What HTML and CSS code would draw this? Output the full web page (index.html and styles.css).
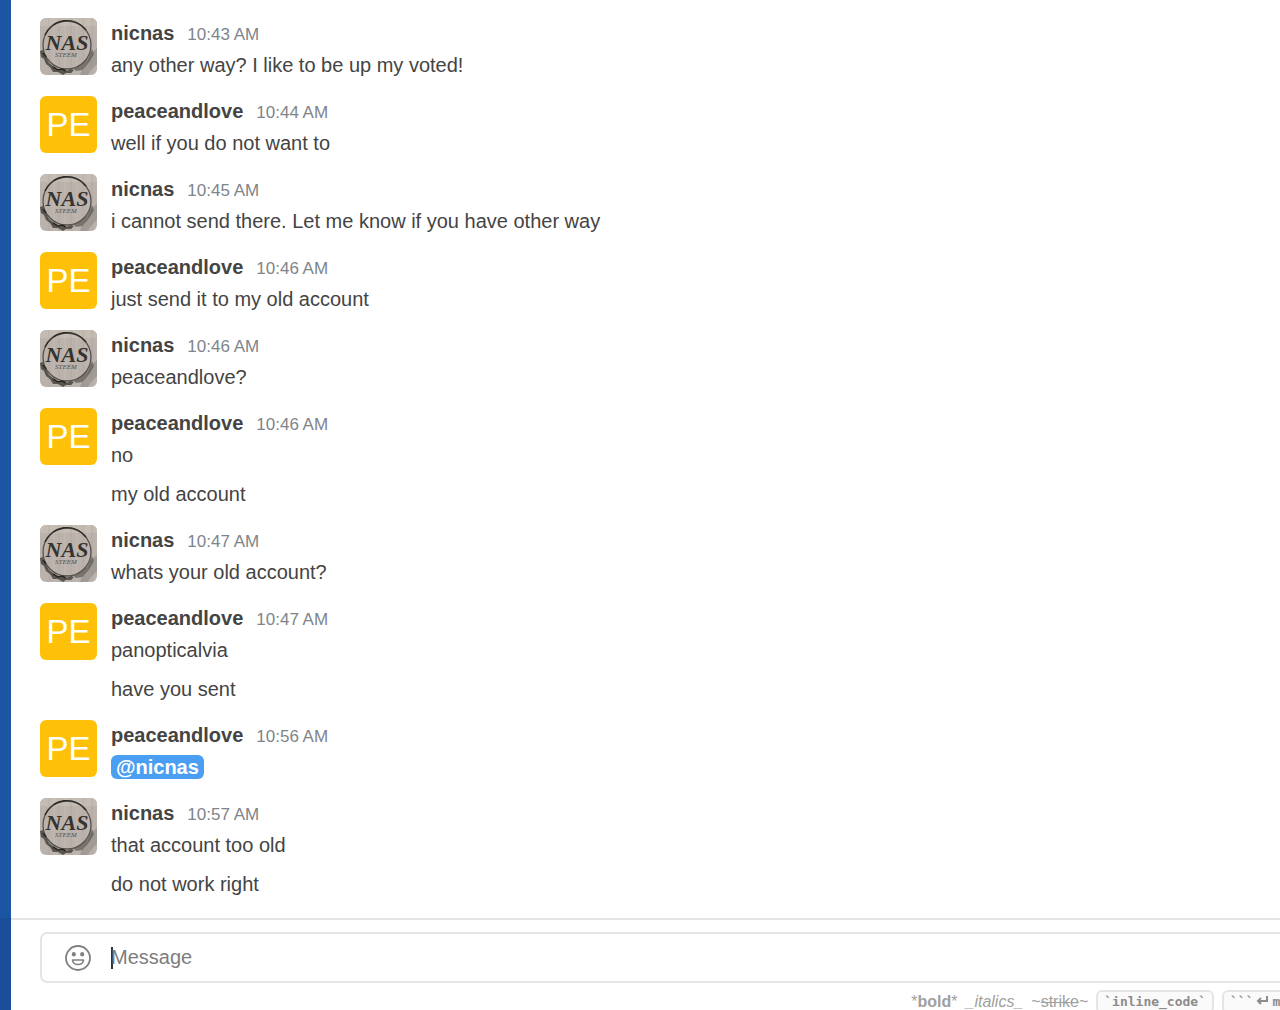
FILE: index.html
```
<!DOCTYPE html>
<html lang="en">

<head>
    <meta charset="UTF-8">
    <meta name="viewport" content="width=device-width, initial-scale=1.0">
    <title>Chat</title>
    <link rel="stylesheet" href="styles.css">
</head>

<body>

    <!-- nicnas avatar, reused by every message -->
    <svg class="sprite" aria-hidden="true">
        <symbol id="nas" viewBox="0 0 57 57">
            <rect width="57" height="57" fill="#bbb3ab"/>
            <path d="M0 0h57v8H0z" fill="#c4bcb3"/>
            <path d="M9 0v57M19 0v57M31 0v57M43 0v57M52 0v57" stroke="#aaa29a" stroke-width="1" opacity=".5"/>
            <path d="M14 0v57M25 0v57M37 0v57M48 0v57" stroke="#cdc5bc" stroke-width="1" opacity=".5"/>
            <path d="M40 57l2-6 5-6 3-9 7-6v16l-6 6-3 5z" fill="#8e8a87" opacity=".6"/>
            <circle cx="27" cy="27" r="24" fill="none" stroke="#55514d" stroke-width="1.3"/>
            <path d="M5 17A24 24 0 0 1 46 12" fill="none" stroke="#2d2b29" stroke-width="1.4"/>
            <path d="M0 33l3-1 1 5 3 4 2 4 4 3 3 3 5 1 3-1 2 2 5-2 3 1-3 3-5 0-3 2-5-3-5 0-3-5-4-3-2-5-3-2z" fill="#47433f" opacity=".85"/>
            <path d="M33 50l5-1 5-5 4-2 3-6 2-5 2 5-4 7-3 4-5 5-6 1z" fill="#5c5854" opacity=".7"/>
            <path d="M13 49l5 3 4-1 4 2M3 35l3 4" fill="none" stroke="#2a2725" stroke-width="1.6"/>
            <text x="27" y="32" text-anchor="middle" class="nas-big">NAS</text>
            <text x="26" y="39" text-anchor="middle" class="nas-small">STEEM</text>
        </symbol>
    </svg>

    <aside class="sidebar">
        <div class="sidebar-footer"></div>
    </aside>

    <main class="room">
        <div class="messages">
            <div class="message">
                <svg class="avatar"><use href="#nas"/></svg>
                <div class="content">
                    <div class="title"><strong>nicnas</strong><time>10:43 AM</time></div>
                    <p>any other way? I like to be up my voted!</p>
                </div>
            </div>
            <div class="message">
                <div class="avatar initials">PE</div>
                <div class="content">
                    <div class="title"><strong>peaceandlove</strong><time>10:44 AM</time></div>
                    <p>well if you do not want to</p>
                </div>
            </div>
            <div class="message">
                <svg class="avatar"><use href="#nas"/></svg>
                <div class="content">
                    <div class="title"><strong>nicnas</strong><time>10:45 AM</time></div>
                    <p>i cannot send there. Let me know if you have other way</p>
                </div>
            </div>
            <div class="message">
                <div class="avatar initials">PE</div>
                <div class="content">
                    <div class="title"><strong>peaceandlove</strong><time>10:46 AM</time></div>
                    <p>just send it to my old account</p>
                </div>
            </div>
            <div class="message">
                <svg class="avatar"><use href="#nas"/></svg>
                <div class="content">
                    <div class="title"><strong>nicnas</strong><time>10:46 AM</time></div>
                    <p>peaceandlove?</p>
                </div>
            </div>
            <div class="message">
                <div class="avatar initials">PE</div>
                <div class="content">
                    <div class="title"><strong>peaceandlove</strong><time>10:46 AM</time></div>
                    <p>no</p>
                    <p>my old account</p>
                </div>
            </div>
            <div class="message">
                <svg class="avatar"><use href="#nas"/></svg>
                <div class="content">
                    <div class="title"><strong>nicnas</strong><time>10:47 AM</time></div>
                    <p>whats your old account?</p>
                </div>
            </div>
            <div class="message">
                <div class="avatar initials">PE</div>
                <div class="content">
                    <div class="title"><strong>peaceandlove</strong><time>10:47 AM</time></div>
                    <p>panopticalvia</p>
                    <p>have you sent</p>
                </div>
            </div>
            <div class="message">
                <div class="avatar initials">PE</div>
                <div class="content">
                    <div class="title"><strong>peaceandlove</strong><time>10:56 AM</time></div>
                    <p><a class="mention" href="#nicnas">@nicnas</a></p>
                </div>
            </div>
            <div class="message">
                <svg class="avatar"><use href="#nas"/></svg>
                <div class="content">
                    <div class="title"><strong>nicnas</strong><time>10:57 AM</time></div>
                    <p>that account too old</p>
                    <p>do not work right</p>
                </div>
            </div>
        </div>

        <footer class="footer">
            <div class="composer">
                <button class="emoji" type="button" aria-label="Emoji">
                    <svg viewBox="0 0 26 26" width="26" height="26">
                        <circle cx="13" cy="13" r="12" fill="none" stroke="#7f7f7f" stroke-width="1.8"/>
                        <ellipse cx="8.800" cy="9.300" rx="2" ry="2.300" fill="#7f7f7f"/>
                        <ellipse cx="17.200" cy="9.300" rx="2" ry="2.300" fill="#7f7f7f"/>
                        <path d="M7.500 15h11c0 2.800-2.500 4.500-5.500 4.500s-5.500-1.700-5.500-4.500z" fill="none" stroke="#7f7f7f" stroke-width="1.600" stroke-linejoin="round"/>
                    </svg>
                </button>
                <span class="caret"></span>
                <input type="text" placeholder="Message" aria-label="Message">
            </div>
            <div class="hints">
                <span>*<b>bold</b>*</span>
                <i>_italics_</i>
                <span>~<s>strike</s>~</span>
                <code>`inline_code`</code>
                <code class="multi">```<svg viewBox="0 0 12 10" width="12" height="10"><path d="M11 0v5H2M5 2L2 5l3 3" fill="none" stroke="#8c8c8c" stroke-width="2"/></svg>multi</code>
            </div>
        </footer>
    </main>

</body>

</html>
```
FILE: styles.css
```
body {
    margin: 0;
    height: 100vh;
    display: flex;
    overflow: hidden;
    background: #fff;
    color: #444;
    font-family: "Liberation Sans", Arial, sans-serif;
    font-size: 20px;
}

.sprite {
    display: none;
}

.nas-big {
    font: italic bold 22px "Liberation Serif", serif;
    fill: #35322f;
}

.nas-small {
    font: italic 7px "Liberation Serif", serif;
    fill: #55504c;
}

.sidebar {
    flex: none;
    width: 11px;
    display: flex;
    flex-direction: column;
    justify-content: flex-end;
    background: #1d55a5;
}

.sidebar-footer {
    height: 92px;
    background: #1b4e98;
}

.room {
    flex: 1;
    min-width: 0;
    display: flex;
    flex-direction: column;
}

.messages {
    flex: 1;
    min-height: 0;
    overflow: hidden;
    padding: 18px 29px 0;
    box-sizing: border-box;
}

.message {
    display: flex;
    gap: 14px;
    margin-bottom: 14px;
}

.avatar {
    flex: none;
    width: 57px;
    height: 57px;
    border-radius: 6px;
    overflow: hidden;
}

.initials {
    background: #ffc107;
    color: #fff;
    font-size: 33px;
    line-height: 57px;
    text-align: center;
}

.title {
    display: flex;
    align-items: baseline;
    gap: 13px;
    height: 30px;
    line-height: 30px;
}

.title time {
    font-size: 17px;
    line-height: 20px;
    color: #80858a;
}

.content p {
    margin: 0;
    line-height: 34px;
}

.content p + p {
    margin-top: 5px;
}

.mention {
    padding: 1px 5px;
    border-radius: 6px;
    background: #4a9ff2;
    color: #fff;
    font-weight: bold;
    text-decoration: none;
}

.footer {
    flex: none;
    height: 92px;
    box-sizing: border-box;
    border-top: 2px solid #e5e5e5;
    padding: 12px 0 0 29px;
}

.composer {
    display: flex;
    align-items: center;
    height: 51px;
    box-sizing: border-box;
    border: 2px solid #e5e5e5;
    border-right: none;
    border-radius: 7px 0 0 7px;
}

.emoji {
    display: flex;
    padding: 0;
    margin: 0 20px 0 23px;
    border: none;
    background: none;
    cursor: pointer;
}

.caret {
    width: 2px;
    height: 22px;
    margin-right: -2px;
    background: #333;
}

.composer input {
    flex: 1;
    min-width: 0;
    padding: 0;
    border: none;
    outline: none;
    background: none;
    font: inherit;
}

.composer input::placeholder {
    color: #7d7d7d;
}

.hints {
    display: flex;
    justify-content: flex-end;
    align-items: center;
    gap: 8px;
    padding-top: 7px;
    font-size: 16px;
    line-height: 20px;
    color: #a0a0a0;
}

.hints code {
    padding: 0 6px;
    border: 2px solid #e5e5e5;
    border-radius: 6px;
    background: #fafafa;
    color: #8c8c8c;
    font: bold 13px/20px "DejaVu Sans Mono", monospace;
}

.hints .multi {
    width: 50px;
    padding-right: 0;
    border-right: none;
    border-radius: 6px 0 0 6px;
    overflow: hidden;
    white-space: nowrap;
}

.multi svg {
    margin: 0 4px 0 3px;
}
```
